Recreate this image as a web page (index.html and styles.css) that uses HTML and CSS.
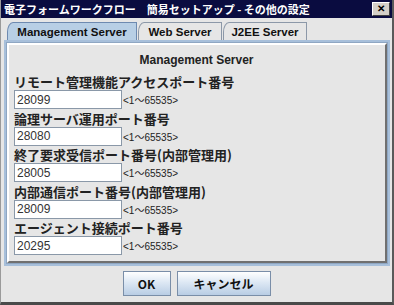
FILE: index.html
```html
<!DOCTYPE html>
<html lang="ja">
<head>
  <meta charset="UTF-8">
  <title>電子フォームワークフロー 簡易セットアップ</title>
  <link rel="stylesheet" href="styles.css">
</head>
<body>

  <div class="window">
    <div class="titlebar">
      <span class="title">電子フォームワークフロー　簡易セットアップ - その他の設定</span>
      <span class="close">&#x2715;</span>
    </div>

    <div class="tabs">
      <div class="tab tab-mgmt active">Management Server</div>
      <div class="tab">Web Server</div>
      <div class="tab">J2EE Server</div>
    </div>

    <div class="panel">
      <div class="panel-inner">
        <div class="panel-title">Management Server</div>

        <div class="field">
          <label for="p1">リモート管理機能アクセスポート番号</label>
          <div class="field-row">
            <input type="text" id="p1" value="28099">
            <span class="range">&lt;1～65535&gt;</span>
          </div>
        </div>

        <div class="field">
          <label for="p2">論理サーバ運用ポート番号</label>
          <div class="field-row">
            <input type="text" id="p2" value="28080">
            <span class="range">&lt;1～65535&gt;</span>
          </div>
        </div>

        <div class="field">
          <label for="p3">終了要求受信ポート番号(内部管理用)</label>
          <div class="field-row">
            <input type="text" id="p3" value="28005">
            <span class="range">&lt;1～65535&gt;</span>
          </div>
        </div>

        <div class="field">
          <label for="p4">内部通信ポート番号(内部管理用)</label>
          <div class="field-row">
            <input type="text" id="p4" value="28009">
            <span class="range">&lt;1～65535&gt;</span>
          </div>
        </div>

        <div class="field">
          <label for="p5">エージェント接続ポート番号</label>
          <div class="field-row">
            <input type="text" id="p5" value="20295">
            <span class="range">&lt;1～65535&gt;</span>
          </div>
        </div>
      </div>
    </div>

    <div class="buttons">
      <button type="button" class="btn-ok">OK</button>
      <button type="button" class="btn-cancel">キャンセル</button>
    </div>
  </div>

</body>
</html>
```

FILE: styles.css
```css
* {
  box-sizing: border-box;
}

body {
  margin: 0;
  padding: 0;
  font-family: 'Liberation Sans', 'Noto Sans CJK JP', sans-serif;
  background: #e6e6e6;
}

.window {
  width: 394px;
  height: 305px;
  display: flex;
  flex-direction: column;
  background: #e6e6e6;
  border-top: none;
  border-left: 1px solid #9a9a9a;
  border-right: 2px solid #5a5a5a;
  border-bottom: 3px solid #4a4a4a;
}

.titlebar {
  height: 18px;
  background: #0a0c40;
  color: #fff;
  display: flex;
  align-items: center;
  justify-content: space-between;
  padding: 0 2px 0 3px;
}

.title {
  font-family: 'Noto Sans CJK JP', sans-serif;
  font-weight: bold;
  font-size: 11px;
  white-space: nowrap;
}

.close {
  width: 18px;
  height: 14px;
  background: #d4d0c8;
  color: #000;
  border: 1px solid;
  border-color: #fff #404040 #404040 #fff;
  font-size: 10px;
  font-weight: bold;
  display: flex;
  align-items: center;
  justify-content: center;
  line-height: 1;
}

.tabs {
  display: flex;
  padding: 4px 0 0 6px;
  height: 22px;
}

.tab {
  width: 84px;
  height: 18px;
  font-size: 11.5px;
  font-weight: bold;
  color: #111;
  display: flex;
  align-items: center;
  justify-content: center;
  background: #e6e6e6;
  border: 1px solid #8c98a8;
  border-bottom: none;
  border-top-left-radius: 6px 10px;
  margin-right: 1px;
}

.tab-mgmt {
  width: 130px;
}

.tab.active {
  background: #b8cfe5;
  border-color: #6e8ab0;
}

.panel {
  margin: 0 2px 0 3px;
  border: 3px solid #a7bfda;
  outline: 1px solid #8ea6c2;
  outline-offset: -3px;
}

.panel-inner {
  border: 2px solid;
  border-color: #fff #707070 #707070 #fff;
  padding: 8px 6px 4px 5px;
  display: flex;
  flex-direction: column;
}

.panel-title {
  text-align: center;
  font-size: 12px;
  font-weight: bold;
  color: #222;
  margin-bottom: 7px;
}

.field {
  display: flex;
  flex-direction: column;
  margin-bottom: 1.5px;
}

.field label {
  font-family: 'Noto Sans CJK JP', sans-serif;
  font-size: 13px;
  font-weight: bold;
  color: #222;
  line-height: 16px;
}

.field-row {
  display: flex;
  align-items: center;
}

.field-row input {
  width: 108px;
  height: 19px;
  padding: 0 2px;
  border: 1px solid #8a98a8;
  background: #fff;
  font-family: 'Liberation Sans', sans-serif;
  font-size: 12px;
  color: #333;
  margin: 0;
}

.range {
  font-size: 10px;
  color: #222;
  margin-left: 1px;
}

.buttons {
  flex: 1;
  display: flex;
  justify-content: center;
  align-items: center;
  gap: 6px;
  padding-bottom: 1px;
}

.buttons button {
  height: 25px;
  font-family: 'Noto Sans CJK JP', sans-serif;
  font-size: 12px;
  font-weight: bold;
  color: #111;
  background: linear-gradient(to bottom, #ffffff, #dde8f4 45%, #b9cde4);
  border: 1px solid #7a8ea8;
  cursor: pointer;
}

.btn-ok {
  width: 48px;
}

.btn-cancel {
  width: 94px;
}
```
